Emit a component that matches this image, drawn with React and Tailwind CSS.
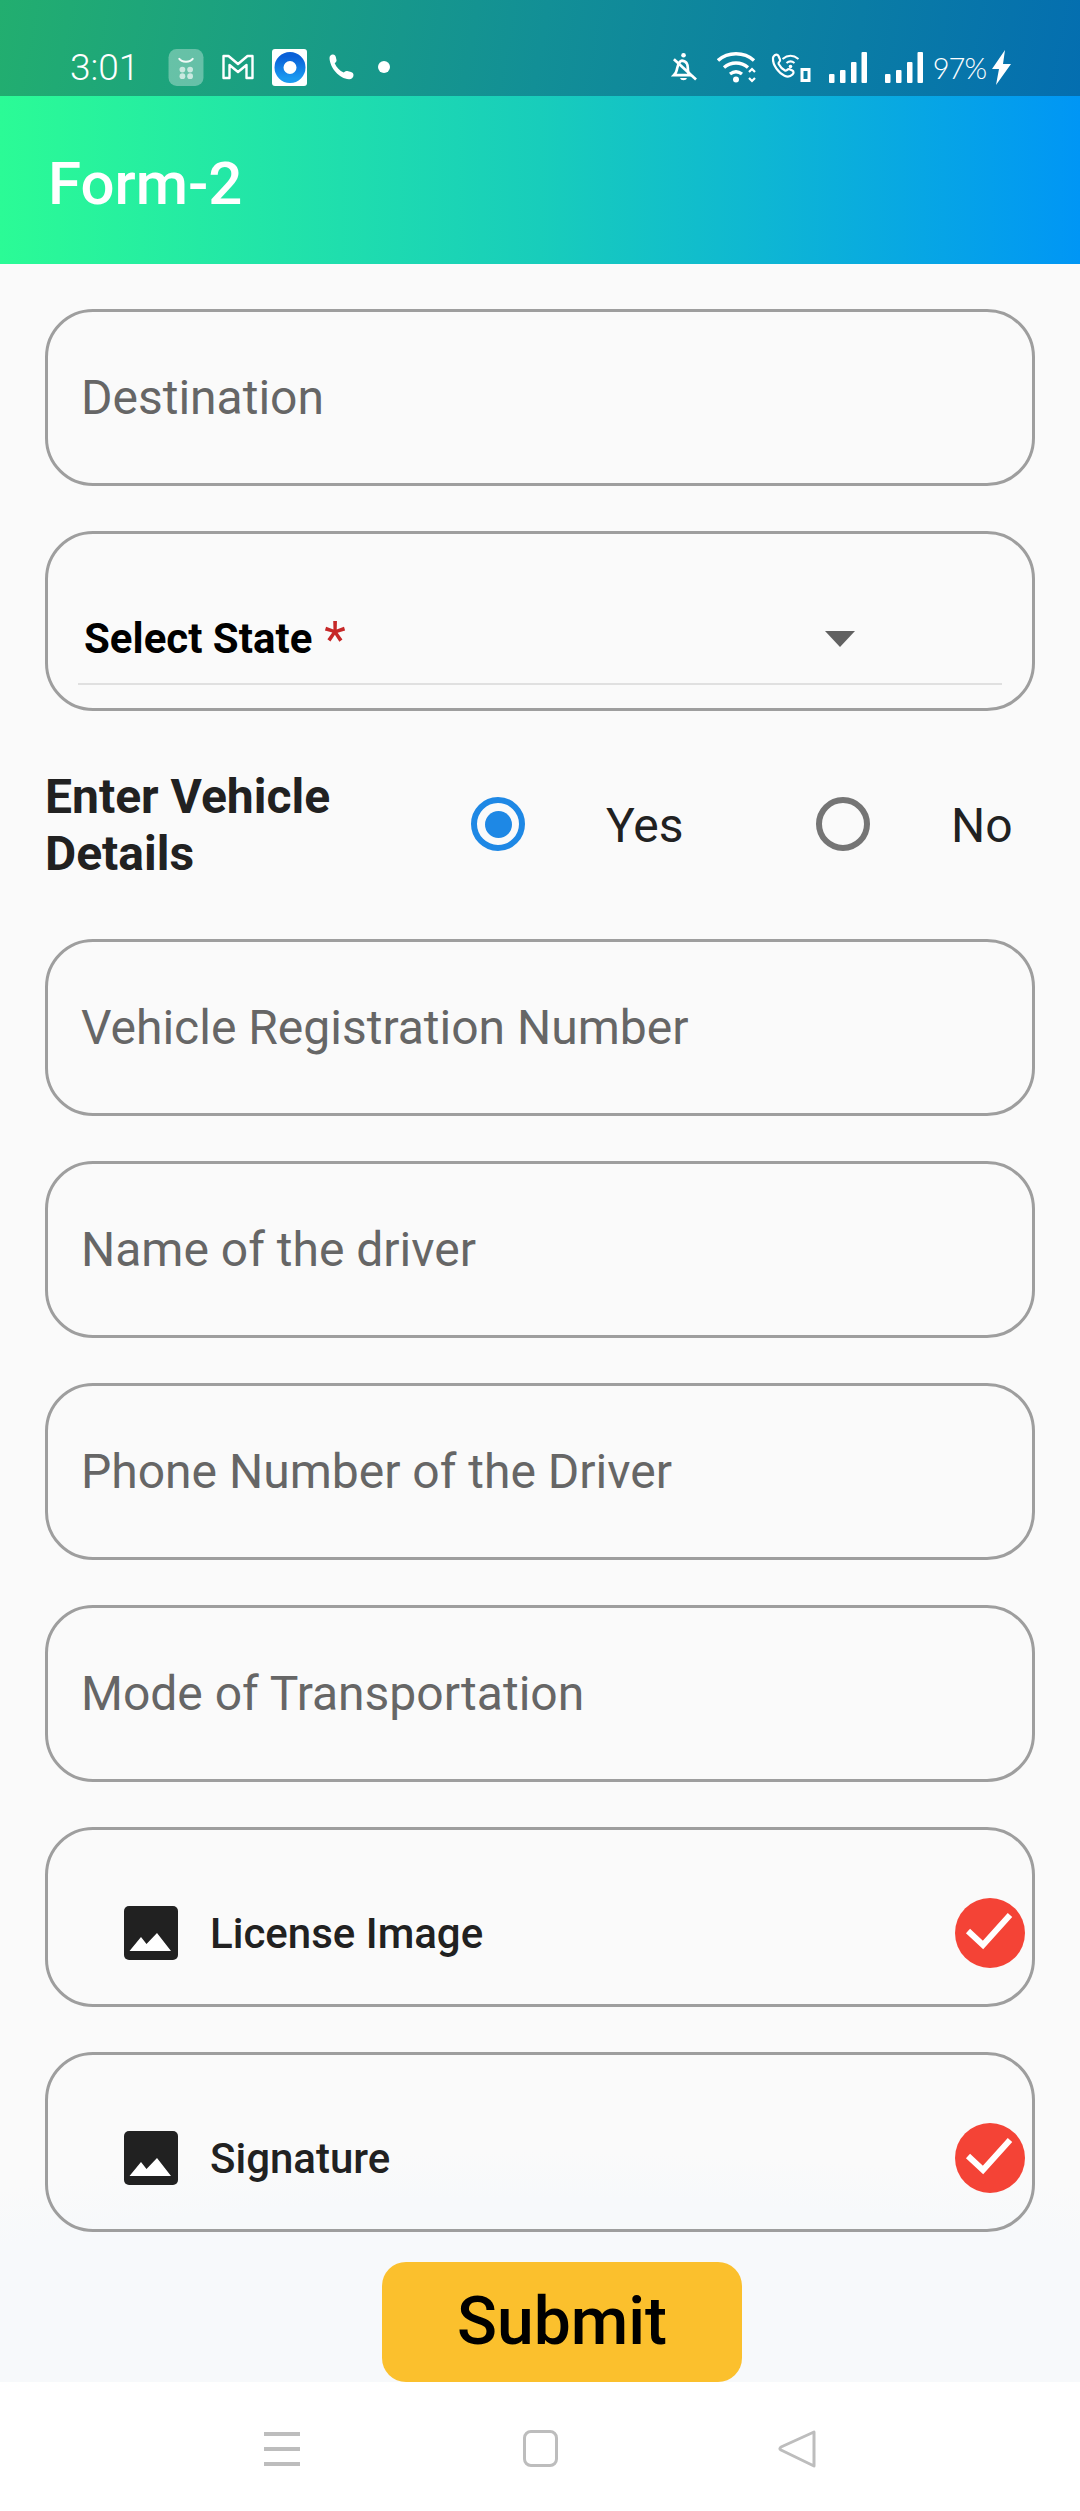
const roboto = { fontFamily: 'Roboto, sans-serif' }

function AppDrawerIcon() {
  return (
    <svg width="36" height="37" viewBox="0 0 34 36" className="shrink-0">
      <rect width="34" height="36" rx="8" fill="#fff" fillOpacity="0.33" />
      <path d="M10 9c3 4.500 11 4.500 14 0" fill="none" stroke="#fff" strokeWidth="2" strokeOpacity="0.9" />
      <g fill="#fff" fillOpacity="0.65">
        <circle cx="13.500" cy="20" r="2.800" />
        <circle cx="21" cy="20" r="2.800" />
        <circle cx="13.500" cy="26.500" r="2.800" />
        <circle cx="21" cy="26.500" r="2.800" />
      </g>
    </svg>
  )
}

function MailIcon() {
  return (
    <svg width="32" height="26" viewBox="0 0 32 26" className="ml-[18px] shrink-0">
      <path d="M1.500 2h5L16 10l9.500-8h5v22h-6V11L16 18 7.500 11v13h-6z" fill="none" stroke="#fff" strokeWidth="2.400" strokeLinejoin="round" />
    </svg>
  )
}

function DiscIcon() {
  return (
    <svg width="35" height="37" viewBox="0 0 35 37" className="ml-[18px] shrink-0">
      <defs>
        <linearGradient id="disc" x1="0" y1="0" x2="0" y2="1">
          <stop offset="0" stopColor="#0a5fd8" />
          <stop offset="1" stopColor="#1a9af0" />
        </linearGradient>
      </defs>
      <rect width="35" height="37" rx="3" fill="#fff" />
      <circle cx="18" cy="18.500" r="11" fill="none" stroke="url(#disc)" strokeWidth="9" />
    </svg>
  )
}

function PhoneIcon() {
  return (
    <svg width="26" height="26" viewBox="0 0 26 26" className="ml-[22px] shrink-0">
      <path d="M.5 4C.5 1.500 2.500.2 4 .5c1.500.3 2.500 1.200 2.800 2.500l.7 3c.2 1-.2 1.800-1 2.500l-.8.8c1.800 4 5 7.500 9 9.300l1-.9c.8-.7 1.600-1 2.600-.7l3.700 1c1.500.4 2.500 1.500 2.500 3 0 2.500-2 4.500-4.500 4.300C10 24.500 1 14 .5 4z" fill="#fff" />
    </svg>
  )
}

function BellOffIcon() {
  return (
    <svg width="26" height="31" viewBox="0 0 27 31" className="shrink-0">
      <path d="M3 23.500h17c-2-1.500-2.500-3.500-2.500-6 0-2 .2-4-1-6-1-2-3-3-5-3.200C7.500 9 7 14 6 18c-.5 2.500-1.500 4-3 5.500z" fill="none" stroke="#fff" strokeWidth="2.800" />
      <path d="M3 7l23 21" stroke="#fff" strokeWidth="2.800" />
      <circle cx="13" cy="2.800" r="2.400" fill="#fff" />
      <path d="M9.500 26.500h7c-.5 3-6.500 3-7 0z" fill="#fff" />
    </svg>
  )
}

function WifiIcon() {
  return (
    <svg width="40" height="31" viewBox="0 0 40 31" className="ml-[20px] shrink-0">
      <g fill="none" stroke="#fff" strokeWidth="3.400">
        <path d="M1 8.500c10-9 26-9 36 0" />
        <path d="M7 15.500c7-6 17-6 24 0" />
        <path d="M13 22c4-3 8-3 12 0" />
      </g>
      <circle cx="19" cy="27.500" r="3" fill="#fff" />
      <path d="M32 20l3-3 3 3M32 26l3 3 3-3" fill="none" stroke="#fff" strokeWidth="2.200" />
    </svg>
  )
}

function WifiCallIcon() {
  return (
    <svg width="40" height="29" viewBox="0 0 39 29" className="ml-[14px] shrink-0">
      <path d="M2 3.500C3.500 1 6 1 7 3l1.500 3.500c.4 1 0 1.800-1 2.700-.5.500-.7 1-.3 1.800 1.500 3 3.500 5 6.300 6.500.7.400 1.200.2 1.800-.3 1-1 1.800-1.300 2.800-.9l2.700 1.200c1.500.8 1.700 2.500.2 4-2.500 2.500-5 2.700-8 1.200C7 20 1 12 1.500 5z" fill="none" stroke="#fff" strokeWidth="2.200" />
      <path d="M11 6c5-4 11-4 16 0M15 10c2.500-2 5.500-2 8 0" fill="none" stroke="#fff" strokeWidth="2" />
      <circle cx="19" cy="13.500" r="1.800" fill="#fff" />
      <path d="M29 15h10v14H29zM32 18v8h4v-8z" fill="#fff" fillRule="evenodd" />
    </svg>
  )
}

function SignalIcon({ className }) {
  return (
    <svg width="38" height="31" viewBox="0 0 38 31" className={`shrink-0 ${className}`}>
      <g fill="#fff">
        <rect x="0" y="22" width="5.500" height="9" rx="1" />
        <rect x="11" y="18" width="5.500" height="13" rx="1" />
        <rect x="22" y="10" width="5.500" height="21" rx="1" />
        <rect x="32.500" y="0" width="5.500" height="31" rx="1" />
      </g>
    </svg>
  )
}

function StatusBar() {
  return (
    <div className="h-[96px] shrink-0 pt-[38px] bg-[linear-gradient(100deg,#22ae6f_0%,#128f96_50%,#046eb0_100%)] text-white">
      <div className="h-[58px] flex items-center pl-[70px] pr-[69px]">
        <span className="text-[37px] font-light leading-none w-[98px]" style={roboto}>3:01</span>
        <AppDrawerIcon />
        <MailIcon />
        <DiscIcon />
        <PhoneIcon />
        <span className="ml-[23px] w-[12px] h-[12px] rounded-full bg-white" />
        <div className="ml-auto flex items-center">
          <BellOffIcon />
          <WifiIcon />
          <WifiCallIcon />
          <SignalIcon className="ml-[18px]" />
          <SignalIcon className="ml-[18px]" />
          <span className="ml-[10px] text-[29px] tracking-[-1px] font-light leading-none [font-family:Lato,sans-serif]">97%</span>
          <svg width="19" height="35" viewBox="0 0 19 35" className="ml-[6px] shrink-0">
            <path d="M13 0L0 19h7L4 35 19 14h-8z" fill="#fff" />
          </svg>
        </div>
      </div>
    </div>
  )
}

function Field({ label, className = '' }) {
  return (
    <div className={`h-[177px] shrink-0 rounded-[48px] border-[3px] border-[#9e9e9e] flex items-center pl-[33px] text-[48px] text-[#666666] ${className}`}>
      {label}
    </div>
  )
}

function Radio({ checked, label, labelWidth, className = '' }) {
  return (
    <div className={`flex items-center ${className}`}>
      <span className={`w-[54px] h-[54px] rounded-full border-[6px] flex items-center justify-center ${checked ? 'border-[#1e88e5]' : 'border-[#757575]'}`}>
        {checked && <span className="w-[27px] h-[27px] rounded-full bg-[#1e88e5]" />}
      </span>
      <span className={`ml-[81px] mt-[3px] text-[48px] text-[#212121] ${labelWidth}`}>{label}</span>
    </div>
  )
}

function UploadRow({ label, className = '' }) {
  return (
    <div className={`h-[180px] shrink-0 rounded-[48px] border-[3px] border-[#9e9e9e] flex items-center pt-[32px] pl-[76px] pr-[7px] ${className}`}>
      <svg width="54" height="54" viewBox="0 0 54 54">
        <rect width="54" height="54" rx="5" fill="#212121" />
        <path d="M5.500 45L17 31l5.500 7L33 27l14 18z" fill="#fff" />
      </svg>
      <span className="ml-[32px] text-[42px] font-medium text-[#212121]">{label}</span>
      <svg width="70" height="70" viewBox="0 0 70 70" className="ml-auto">
        <circle cx="35" cy="35" r="35" fill="#f44336" />
        <path d="M13 33l15 14 27-30" fill="none" stroke="#fff" strokeWidth="6" />
      </svg>
    </div>
  )
}

function NavBar() {
  return (
    <div className="h-[129px] shrink-0 bg-white flex items-start pt-[47px] pl-[264px]">
      <div className="w-[36px] h-[34px] mt-[3px] flex flex-col justify-between">
        <span className="h-[4px] bg-[#bdbdbd]" />
        <span className="h-[4px] bg-[#bdbdbd]" />
        <span className="h-[4px] bg-[#bdbdbd]" />
      </div>
      <span className="ml-[223px] mt-[1px] w-[35px] h-[37px] rounded-[8px] border-[3px] border-[#bdbdbd]" />
      <svg width="38" height="40" viewBox="0 0 38 40" className="ml-[220px]">
        <path d="M36 3v34L3 21c-1.500-1-1.500-1.500 0-3z" fill="none" stroke="#bdbdbd" strokeWidth="3" strokeLinejoin="round" />
      </svg>
    </div>
  )
}

export default function App() {
  return (
    <div className="w-[1080px] h-[2511px] flex flex-col overflow-hidden bg-[#fafafa]" style={roboto}>
      <StatusBar />
      <header className="h-[168px] shrink-0 flex items-center pl-[48px] pt-[8px] bg-[linear-gradient(90deg,#2bfb96_0%,#18cdbb_50%,#0096f5_100%)]">
        <h1 className="text-[60px] font-medium text-white leading-none">Form-2</h1>
      </header>

      <main className="h-[2118px] shrink-0 px-[45px] pt-[45px] flex flex-col bg-[radial-gradient(ellipse_1000px_230px_at_50%_100%,#f7f9fb_80%,#fafafa_100%)]">
        <Field label="Destination" />

        <div className="mt-[45px] h-[180px] shrink-0 rounded-[48px] border-[3px] border-[#9e9e9e] px-[30px] pt-[70px]">
          <div className="h-[81px] flex items-center border-b-[2px] border-[#e0e0e0] pb-[10px]">
            <span className="pl-[6px] text-[42px] font-bold text-black leading-none">Select State</span>
            <span className="ml-[12px] mt-[2px] text-[50px] text-[#c62828] leading-none">*</span>
            <svg width="30" height="16" viewBox="0 0 30 16" className="ml-auto mr-[147px]">
              <path d="M0 0h30L15 16z" fill="#616161" />
            </svg>
          </div>
        </div>

        <div className="mt-[56px] h-[114px] shrink-0 flex items-center">
          <div className="w-[426px] mt-[1px] text-[48px] leading-[57px] font-bold text-[#212121]">Enter Vehicle Details</div>
          <Radio checked label="Yes" labelWidth="w-[130px]" />
          <Radio label="No" labelWidth="" className="ml-[80px]" />
        </div>

        <Field label="Vehicle Registration Number" className="mt-[58px]" />
        <Field label="Name of the driver" className="mt-[45px]" />
        <Field label="Phone Number of the Driver" className="mt-[45px]" />
        <Field label="Mode of Transportation" className="mt-[45px]" />
        <UploadRow label="License Image" className="mt-[45px]" />
        <UploadRow label="Signature" className="mt-[45px]" />

        <button className="mt-[30px] ml-[337px] w-[360px] h-[120px] shrink-0 rounded-[24px] bg-[#fbc02d] text-[66px] font-medium text-black leading-none">
          Submit
        </button>
      </main>

      <NavBar />
    </div>
  )
}
